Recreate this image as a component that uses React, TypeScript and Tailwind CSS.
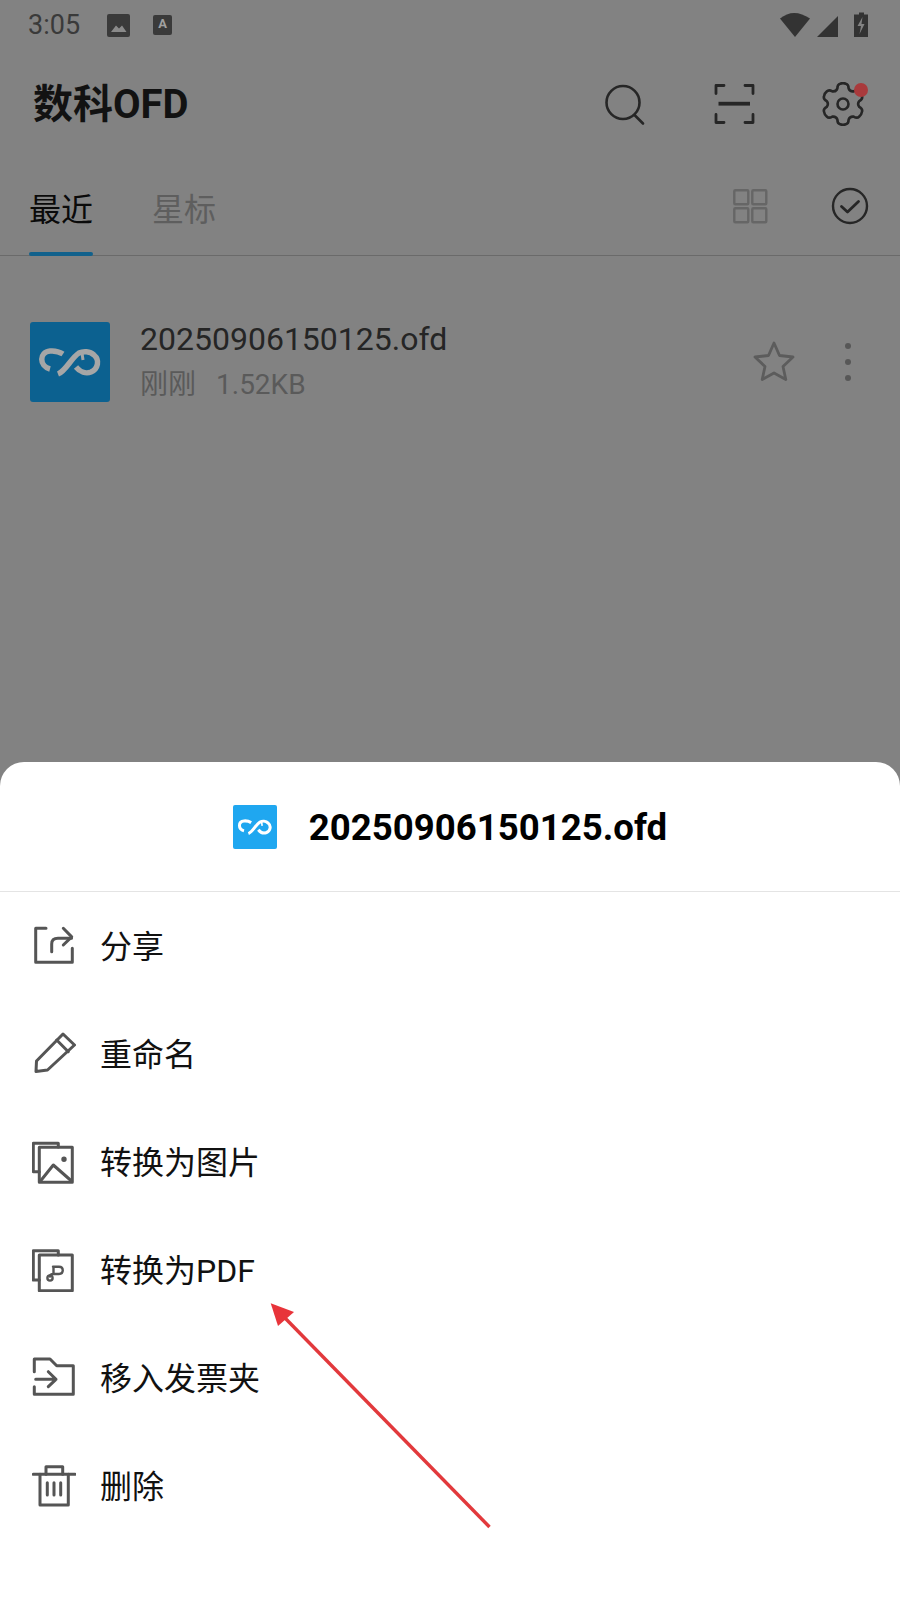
import React from 'react';

const ROWS = ['分享', '重命名', '转换为图片', '转换为PDF', '移入发票夹', '删除'];

// gear outline with six rounded teeth, top tooth pointing up
const gearPath = () => {
  const pt = (r: number, deg: number) => {
    const a = ((deg - 90) * Math.PI) / 180;
    return `${(22 + r * Math.cos(a)).toFixed(2)} ${(22 + r * Math.sin(a)).toFixed(2)}`;
  };
  let d = `M${pt(15, -30)}`;
  for (let i = 0; i < 6; i++) {
    const c = i * 60;
    d += ` L${pt(16.5, c - 20)} Q${pt(20.5, c - 16)} ${pt(20.5, c - 8)} Q${pt(21.5, c)} ${pt(20.5, c + 8)} Q${pt(20.5, c + 16)} ${pt(16.5, c + 20)} Q${pt(14, c + 30)} ${pt(16.5, c + 40)}`;
  }
  return d + ' Z';
};

function OfdLogo({ stroke }: { stroke: string }) {
  return (
    <svg viewBox="0 0 80 80" className="w-full h-full" fill="none" stroke={stroke} strokeWidth="5.5">
      <path d="M20 47 C9 44 9 30 20 29 C25 28.5 29 29.5 33 32" />
      <path d="M28 52 C36 49 41 36 49 31 C53 29 60 29 64 33 C70 38 68 47 61 50 C56 52 50 50 46 45" />
      <path d="M52 31 L53 38" strokeWidth="3" />
    </svg>
  );
}

function RowIcon({ index }: { index: number }) {
  const common = {
    viewBox: '0 0 44 44',
    className: 'w-[44px] h-[44px] shrink-0',
    fill: 'none',
    stroke: '#555555',
    strokeWidth: 3,
    strokeLinecap: 'round' as const,
    strokeLinejoin: 'round' as const,
  };
  if (index === 0)
    return (
      <svg {...common}>
        <path d="M14 4.3H3.7V38.3H40.3V24.3" />
        <path d="M19.7 27.7V20C19.7 16.5 22 14.3 26 14.3H39.5" />
        <path d="M31.3 4.3L39.7 12.9L31.3 21" />
      </svg>
    );
  if (index === 1)
    return (
      <svg {...common}>
        <path d="M4 39.5L4.5 29L31 2L42.5 13L15.5 38Z" />
        <path d="M24.7 8L36.3 19.7" />
      </svg>
    );
  if (index === 2)
    return (
      <svg {...common}>
        <path d="M26.3 7V3.3H1.3V31.7H7.3" />
        <rect x="7.3" y="7.3" width="33" height="35" />
        <path d="M8.5 41L21.3 25L39.5 41" />
        <circle cx="32" cy="19.3" r="1.2" fill="#555555" />
      </svg>
    );
  if (index === 3)
    return (
      <svg {...common}>
        <path d="M26.3 7V2.7H1.3V32H7.3" />
        <rect x="7.3" y="7" width="33" height="35.7" />
        <path d="M21 18.7H27C32 18.7 32 26 27 26H21.5C19 26 18 27 18 28.5M21.5 18.7V26" strokeWidth="2.4" />
        <circle cx="18" cy="30" r="2.6" strokeWidth="2.4" />
      </svg>
    );
  if (index === 4)
    return (
      <svg {...common}>
        <path d="M2.3 15.7V3H18L24.7 9.7H41.3V38.3H2.3V30.7" />
        <path d="M3.7 23.3H24M16.3 15.7L24 23.3L16.3 30.7" />
      </svg>
    );
  return (
    <svg {...common}>
      <path d="M1.3 10.3H43" />
      <path d="M14 10.3V2.7H30.7V10.3" />
      <path d="M8 10.3V41H36.3V10.3" />
      <path d="M15.3 18.7V31M22 18.7V31M28.7 18.7V31" />
    </svg>
  );
}

function StatusBar() {
  return (
    <div className="h-[48px] flex items-center pl-[28px] pr-[30px] pt-[2px]">
      <span className="text-[27px] leading-none text-[#3a3a3a] w-[79px]">3:05</span>
      <svg viewBox="0 0 23 23" className="w-[23px] h-[23px]">
        <rect width="23" height="23" rx="2" fill="#3a3a3a" />
        <path d="M4 18L9 11.5L12 14.5L15 11.5L19.5 18Z" fill="#8a8a8a" />
      </svg>
      <div className="relative ml-[23px] w-[19px] h-[20px] rounded-[2px] bg-[#3a3a3a] flex justify-center">
        <span className="text-[13px] leading-[17px] font-bold text-[#a0a0a0]">A</span>
      </div>
      <div className="ml-auto flex items-center">
        <svg viewBox="0 0 92 28" className="w-[92px] h-[28px]" fill="#333333">
          <path d="M2 7.5C11 0 21 0 32 7.5L17 26Z" />
          <path d="M39 26L60 5V26Z" />
          <path d="M76 3.5H81V1.5H86V3.5H90V26H76ZM84.5 6L79.5 15H83L81.5 23L86.5 13H83.5Z" fillRule="evenodd" />
        </svg>
      </div>
    </div>
  );
}

function Header() {
  return (
    <div className="h-[112px] flex items-center pl-[33px] pr-[35px]">
      <h1 className="text-[40px] leading-none font-bold text-[#121212] pt-[2px]">数科OFD</h1>
      <div className="ml-auto flex items-center gap-[65px] text-[#262626]">
        <svg viewBox="0 0 44 44" className="w-[44px] h-[44px]" fill="none" stroke="currentColor" strokeWidth="2.6" strokeLinecap="round">
          <circle cx="20" cy="20.5" r="16.5" />
          <path d="M31.5 33L40 41.5" />
        </svg>
        <svg viewBox="0 0 44 44" className="w-[44px] h-[44px]" fill="none" stroke="currentColor" strokeWidth="2.8" strokeLinecap="round" strokeLinejoin="round">
          <path d="M12 3.5H4V11.5M33 3.5H41V11.5M4 32.5V40.5H12M41 32.5V40.5H33" />
          <path d="M6.5 21.7H38" strokeWidth="3.8" strokeLinecap="butt" />
        </svg>
        <div className="relative w-[44px] h-[44px]">
          <svg viewBox="0 0 44 44" className="w-[44px] h-[44px]" fill="none" stroke="currentColor" strokeWidth="2.6" strokeLinejoin="round">
            <path d={gearPath()} />
            <circle cx="22" cy="22" r="5.5" />
          </svg>
          <span className="absolute left-[33px] top-[1px] w-[14px] h-[14px] rounded-full bg-[#a93a3c]" />
        </div>
      </div>
    </div>
  );
}

function Tabs() {
  return (
    <div className="h-[96px] flex border-b border-[#6a6a6a] pl-[29px] pr-[28px]">
      <div className="relative w-[64px] flex justify-center pt-[26px]">
        <span className="text-[32px] leading-[48px] text-[#0a0a0a]">最近</span>
        <span className="absolute left-0 right-0 bottom-[-1px] h-[4px] rounded-[2px] bg-[#11618c]" />
      </div>
      <div className="ml-[59px] pt-[26px]">
        <span className="text-[32px] leading-[48px] text-[#5e5e5e]">星标</span>
      </div>
      <div className="ml-auto flex gap-[56px] pt-[24px] h-[68px]">
        <svg viewBox="0 0 44 44" className="w-[44px] h-[44px]" fill="none" stroke="#666666" strokeWidth="2.4">
          <rect x="6.3" y="6.3" width="14" height="14" rx="1" />
          <rect x="24.3" y="6.3" width="14" height="14" rx="1" />
          <rect x="6.3" y="24.3" width="14" height="14" rx="1" />
          <rect x="24.3" y="24.3" width="14" height="14" rx="1" />
        </svg>
        <svg viewBox="0 0 44 44" className="w-[44px] h-[44px]" fill="none" stroke="#262626" strokeWidth="2.4" strokeLinecap="round" strokeLinejoin="round">
          <circle cx="22" cy="22" r="17" />
          <path d="M13.5 22.5L19.5 28L30.5 17.5" strokeWidth="2.8" />
        </svg>
      </div>
    </div>
  );
}

function FileRow() {
  return (
    <div className="flex items-center mt-[60px] pl-[30px] pr-[46px]">
      <div className="w-[80px] h-[80px] rounded-[3px] bg-[#0c6190] shrink-0">
        <OfdLogo stroke="#a6a6a6" />
      </div>
      <div className="ml-[30px]">
        <div className="text-[32px] leading-[46px] text-[#252525]">20250906150125.ofd</div>
        <div className="text-[28px] leading-[46px] text-[#5a5a5a]">刚刚<span className="ml-[20px]">1.52KB</span></div>
      </div>
      <svg viewBox="0 0 44 44" className="ml-auto w-[44px] h-[44px]" fill="none" stroke="#5c5c5c" strokeWidth="2.8" strokeLinejoin="round">
        <path d="M22 3L27.5 15.5L41 17L31 26.5L33.8 39.5L22 33L10.2 39.5L13 26.5L3 17L16.5 15.5Z" />
      </svg>
      <svg viewBox="0 0 12 44" className="ml-[46px] w-[12px] h-[44px]" fill="#575757">
        <circle cx="6" cy="6" r="3" />
        <circle cx="6" cy="22" r="3" />
        <circle cx="6" cy="38" r="3" />
      </svg>
    </div>
  );
}

function BottomSheet() {
  return (
    <div className="absolute left-0 right-0 bottom-0 h-[838px] bg-white rounded-t-[24px]">
      <div className="h-[130px] flex items-center justify-center gap-[32px] border-b border-[#e4e4e4]">
        <div className="w-[44px] h-[44px] rounded-[2px] bg-[#1fa7f0]">
          <OfdLogo stroke="#ffffff" />
        </div>
        <span className="text-[36.6px] font-bold text-black leading-none pt-[3px]">20250906150125.ofd</span>
      </div>
      <div>
        {ROWS.map((label, i) => (
          <div key={label} className="h-[108px] flex items-center pl-[32px]">
            <RowIcon index={i} />
            <span className="ml-[24px] text-[32px] leading-none text-[#111111] pt-[2px]">{label}</span>
          </div>
        ))}
      </div>
    </div>
  );
}

export default function App() {
  return (
    <div
      className="relative w-[900px] h-[1600px] overflow-hidden bg-[#828282]"
      style={{ fontFamily: 'Roboto, "Noto Sans CJK SC", sans-serif' }}
    >
      <StatusBar />
      <Header />
      <Tabs />
      <FileRow />
      <BottomSheet />
      {/* red annotation arrow drawn over the sheet */}
      <svg viewBox="0 0 900 1600" className="absolute inset-0 w-[900px] h-[1600px] pointer-events-none">
        <path d="M489.5 1527L285 1318" stroke="#e2393c" strokeWidth="3.4" />
        <path d="M270.7 1303.3L294 1312L278 1326Z" fill="#e8343a" />
      </svg>
    </div>
  );
}
